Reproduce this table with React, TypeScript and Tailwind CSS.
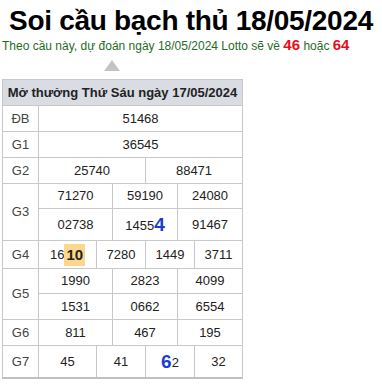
import React from "react";

const B = "border-[#c8c8c8]";

function Cell({ w, children, last }: { w: string; children: React.ReactNode; last?: boolean }) {
  return (
    <div className={`${w} flex items-center justify-center ${last ? "" : "border-r"} ${B}`}>
      {children}
    </div>
  );
}

function Row({ label, children, last }: { label: string; children: React.ReactNode; last?: boolean }) {
  return (
    <div className={`flex ${last ? "" : "border-b"} ${B}`}>
      <div className={`w-[36px] flex items-center justify-center border-r ${B} text-[#444]`}>{label}</div>
      <div className="flex-1 flex flex-col">{children}</div>
    </div>
  );
}

function Sub({ h, children, last }: { h: string; children: React.ReactNode; last?: boolean }) {
  return <div className={`flex ${h} ${last ? "" : "border-b"} ${B}`}>{children}</div>;
}

export default function App() {
  return (
    <div className="w-[382px] h-[386px] bg-white overflow-hidden" style={{ fontFamily: '"Liberation Sans", Arial, sans-serif' }}>
      <h1 className="text-[28px] font-bold text-black text-center leading-[32px] pt-[5px] tracking-[-0.3px] whitespace-nowrap">
        Soi cầu bạch thủ 18/05/2024
      </h1>
      <div className="pl-[2px] text-[12px] text-[#1f6b1f] leading-[16px] mt-[0px] whitespace-nowrap">
        Theo cầu này, dự đoán ngày 18/05/2024 Lotto sẽ về{" "}
        <span className="text-[15px] font-bold text-[#e3101b]">46</span> hoặc{" "}
        <span className="text-[15px] font-bold text-[#e3101b]">64</span>
      </div>
      <div className="flex pl-[104px] mt-[6px] h-[11px]">
        <div className="w-0 h-0 border-l-[8px] border-r-[8px] border-b-[11px] border-l-transparent border-r-transparent border-b-[#c4c4c4]" />
      </div>
      <div className={`ml-[2px] mt-[8px] w-[241px] border ${B} border-b-[2px] border-b-[#c0c0c0] text-[13px] text-[#222]`}>
        <div className={`h-[26px] flex items-center justify-center bg-[#d9dce3] border-b ${B} font-bold text-[13px] text-[#222]`}>
          Mở thưởng Thứ Sáu ngày 17/05/2024
        </div>
        <Row label="ĐB">
          <Sub h="h-[25px]" last><Cell w="flex-1" last>51468</Cell></Sub>
        </Row>
        <Row label="G1">
          <Sub h="h-[25px]" last><Cell w="flex-1" last>36545</Cell></Sub>
        </Row>
        <Row label="G2">
          <Sub h="h-[25px]" last>
            <Cell w="w-[107px]">25740</Cell>
            <Cell w="flex-1" last>88471</Cell>
          </Sub>
        </Row>
        <Row label="G3">
          <Sub h="h-[25px]">
            <Cell w="w-[74px]">71270</Cell>
            <Cell w="w-[65px]">59190</Cell>
            <Cell w="flex-1" last>24080</Cell>
          </Sub>
          <Sub h="h-[31px]" last>
            <Cell w="w-[74px]">02738</Cell>
            <Cell w="w-[65px]">
              <span className="pt-[3px]">1455</span>
              <span className="text-[19px] font-bold text-[#1a3cd6] leading-none">4</span>
            </Cell>
            <Cell w="flex-1" last>91467</Cell>
          </Sub>
        </Row>
        <Row label="G4">
          <Sub h="h-[27px]" last>
            <Cell w="w-[58px]">
              <span>16</span>
              <span className="bg-[#fcd68a] font-bold text-[15px] px-[2px] leading-[22px]">10</span>
            </Cell>
            <Cell w="w-[49px]">7280</Cell>
            <Cell w="w-[49px]">1449</Cell>
            <Cell w="flex-1" last>3711</Cell>
          </Sub>
        </Row>
        <Row label="G5">
          <Sub h="h-[25px]">
            <Cell w="w-[74px]">1990</Cell>
            <Cell w="w-[65px]">2823</Cell>
            <Cell w="flex-1" last>4099</Cell>
          </Sub>
          <Sub h="h-[25px]" last>
            <Cell w="w-[74px]">1531</Cell>
            <Cell w="w-[65px]">0662</Cell>
            <Cell w="flex-1" last>6554</Cell>
          </Sub>
        </Row>
        <Row label="G6">
          <Sub h="h-[25px]" last>
            <Cell w="w-[74px]">811</Cell>
            <Cell w="w-[65px]">467</Cell>
            <Cell w="flex-1" last>195</Cell>
          </Sub>
        </Row>
        <Row label="G7" last>
          <Sub h="h-[31px]" last>
            <Cell w="w-[58px]">45</Cell>
            <Cell w="w-[49px]">41</Cell>
            <Cell w="w-[49px]">
              <span className="text-[19px] font-bold text-[#1a3cd6] leading-none">6</span>
              <span className="pt-[3px]">2</span>
            </Cell>
            <Cell w="flex-1" last>32</Cell>
          </Sub>
        </Row>
      </div>
    </div>
  );
}
